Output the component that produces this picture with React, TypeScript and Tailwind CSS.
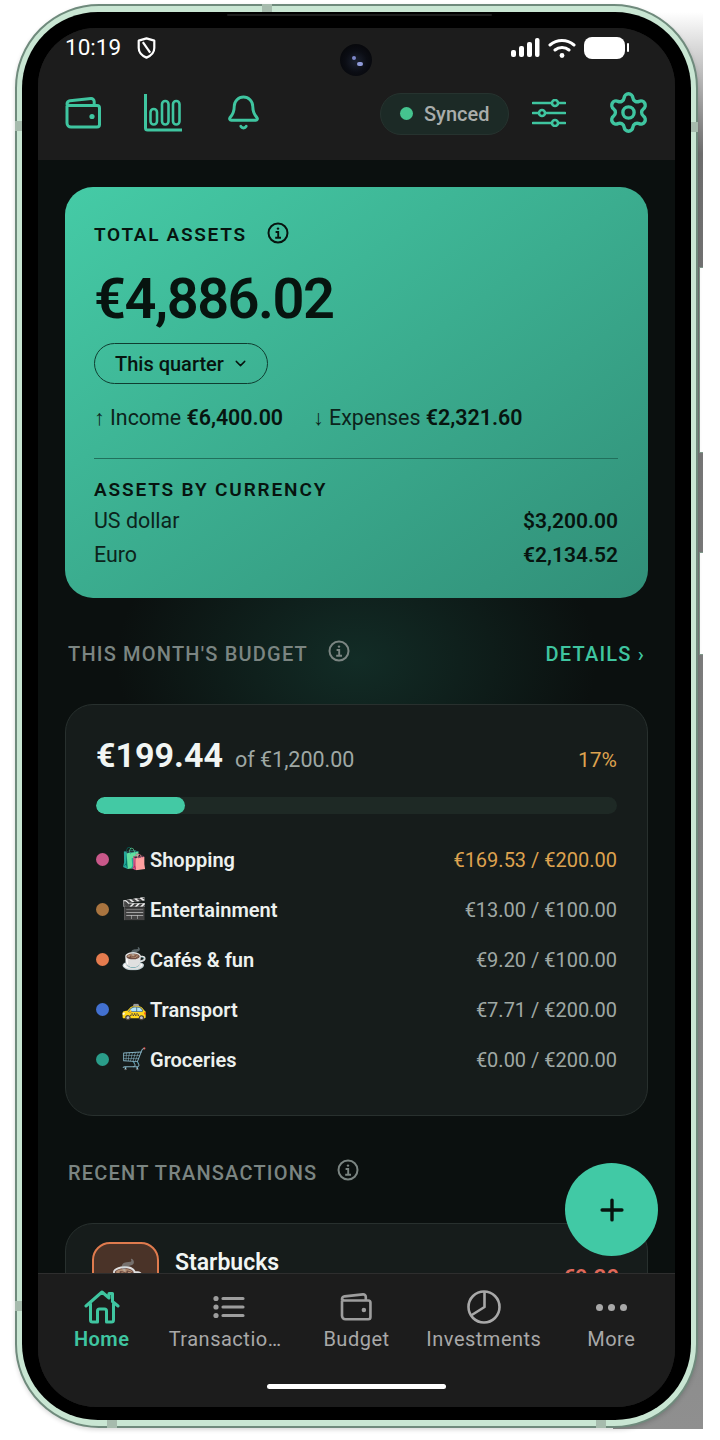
import React from 'react';
import { Bell, ChevronDown, Plus, Settings } from 'lucide-react';

const categories = [
    { dot: 'bg-[#c9588a]', emoji: '🛍️', name: 'Shopping', value: '€169.53 / €200.00', warn: true },
    { dot: 'bg-[#a9743f]', emoji: '🎬', name: 'Entertainment', value: '€13.00 / €100.00', warn: false },
    { dot: 'bg-[#e57b4e]', emoji: '☕', name: 'Cafés & fun', value: '€9.20 / €100.00', warn: false },
    { dot: 'bg-[#4270d0]', emoji: '🚕', name: 'Transport', value: '€7.71 / €200.00', warn: false },
    { dot: 'bg-[#2a9d8a]', emoji: '🛒', name: 'Groceries', value: '€0.00 / €200.00', warn: false },
];

// lighter antenna bands cut into the metal frame
const bands = [
    'left-[245px] -top-[2px] w-[10px] h-[9px]',
    '-left-[2px] top-[115px] w-[8px] h-[10px]',
    '-right-[2px] top-[116px] w-[8px] h-[10px]',
    '-left-[2px] top-[1295px] w-[8px] h-[10px]',
    'left-[90px] -bottom-[2px] w-[10px] h-[9px]',
    'right-[90px] -bottom-[2px] w-[10px] h-[9px]',
];

const InfoIcon = ({ className }: { className: string }) => (
    <svg viewBox="0 0 22 22" fill="none" stroke="currentColor" strokeWidth="2" className={className}>
        <circle cx="11" cy="11" r="9.5" />
        <circle cx="11" cy="6.6" r="1.2" fill="currentColor" stroke="none" />
        <path d="M8.6 10h2.6v5.6M8.2 15.8h5.8" strokeWidth="1.9" />
    </svg>
);

const WalletIcon = ({ className }: { className: string }) => (
    <svg viewBox="0 0 36 32" fill="none" stroke="currentColor" strokeWidth="3" strokeLinejoin="round" className={className}>
        <path d="M2 8.5V26a4 4 0 0 0 4 4h26a2.5 2.5 0 0 0 2.5-2.5V11a2.5 2.5 0 0 0-2.5-2.5H6A4 4 0 0 1 2 7a3.5 3.5 0 0 1 3-3.2L26 1.6a3 3 0 0 1 3.2 2.9v3.5" />
        <circle cx="27" cy="19.5" r="2.6" fill="currentColor" stroke="none" />
    </svg>
);

const ChartIcon = () => (
    <svg viewBox="0 0 38 38" fill="none" stroke="currentColor" strokeWidth="3" className="w-[38px] h-[38px] text-[#3fc5a0]">
        <path d="M1.5 0v34a2 2 0 0 0 2 2H38" strokeLinecap="round" />
        <rect x="6.5" y="15" width="6.5" height="15.5" rx="3.2" strokeWidth="2.6" />
        <rect x="18" y="7" width="6.5" height="23.5" rx="3.2" strokeWidth="2.6" />
        <rect x="29" y="7" width="6.5" height="23.5" rx="3.2" strokeWidth="2.6" />
    </svg>
);

const SlidersIcon = () => (
    <svg viewBox="0 0 34 28" fill="none" stroke="currentColor" strokeWidth="2.6" strokeLinecap="round" className="w-[34px] h-[28px] text-[#3fc5a0]">
        <path d="M1 4h32M1 14h32M1 24h32" />
        <circle cx="23" cy="4" r="3" fill="#1c1c1c" />
        <circle cx="10" cy="14" r="3" fill="#1c1c1c" />
        <circle cx="23" cy="24" r="3" fill="#1c1c1c" />
    </svg>
);

const HomeIcon = () => (
    <svg viewBox="0 0 36 34" fill="none" stroke="currentColor" strokeWidth="3" strokeLinejoin="round" strokeLinecap="round" className="w-[36px] h-[34px] text-[#3fc5a0]">
        <path d="M2 16 18 2l7 6V3.5h3.5v8L34 16" />
        <path d="M6.5 14v16a2 2 0 0 0 2 2h5V21a2 2 0 0 1 2-2h5a2 2 0 0 1 2 2v11h5a2 2 0 0 0 2-2V14" />
    </svg>
);

const ListIcon = () => (
    <svg viewBox="0 0 32 24" fill="none" stroke="currentColor" strokeWidth="3.2" strokeLinecap="round" className="w-[32px] h-[24px] text-[#9d9d9d]">
        <path d="M10 3.5h20M10 12h20M10 20.5h20" />
        <circle cx="3" cy="3.5" r="2.6" fill="currentColor" stroke="none" />
        <circle cx="3" cy="12" r="2.6" fill="currentColor" stroke="none" />
        <circle cx="3" cy="20.5" r="2.6" fill="currentColor" stroke="none" />
    </svg>
);

const PieIcon = () => (
    <svg viewBox="0 0 34 34" fill="none" stroke="currentColor" strokeWidth="2.6" strokeLinejoin="round" className="w-[34px] h-[34px] text-[#a8a8a8]">
        <circle cx="17" cy="17" r="15.5" />
        <path d="M17.5 1.5V17L4 25.5" />
    </svg>
);

const NavItem = ({ icon, label, active, labelClass }: { icon: React.ReactNode; label: string; active?: boolean; labelClass?: string }) => (
    <div className="flex flex-col items-center">
        <div className="h-[36px] flex items-center justify-center">{icon}</div>
        <span
            className={
                active
                    ? 'text-[20px] leading-[28px] font-semibold tracking-[0.5px] text-[#3fc5a0]'
                    : `text-[20px] leading-[28px] tracking-[0.5px] text-[#a8a8a8] whitespace-nowrap ${labelClass ?? ''}`
            }
        >
            {label}
        </span>
    </div>
);

const SectionHeading = ({ title }: { title: string }) => (
    <div className="flex items-center">
        <span className="text-[20px] leading-[28px] font-medium tracking-[1.2px] text-[#7b8582]">{title}</span>
        <InfoIcon className="ml-[20px] w-[22px] h-[22px] text-[#7b8582] -mt-[7px]" />
    </div>
);

export default function App() {
    return (
        <div className="w-[720px] h-[1440px] bg-white overflow-hidden font-['Roboto',sans-serif]">
            <div className="relative isolate ml-[15px] mt-[4px] w-[683px] h-[1424px]">
                {/* cast shadow behind the right edge, cut off by the picture */}
                <div className="absolute -z-10 -right-[5px] top-[8px] -bottom-[1px] w-[90px] bg-gradient-to-b from-white via-[#6e6e6e] via-[10%] to-[#8f8f8f]" />
                {/* side keys */}
                <div className="absolute -z-10 -right-[5px] top-[263px] w-[4px] h-[186px] bg-white border-l border-y border-[#7f9a8b]" />
                <div className="absolute -z-10 -right-[5px] top-[548px] w-[4px] h-[103px] bg-white border-l border-y border-[#7f9a8b]" />
                <div className="relative w-full h-full rounded-[84px] bg-[#c9e6d3] border-[2px] border-[#6f8a7c] pt-[6px] pb-[6px] px-[5px] shadow-[0_2px_4px_rgba(0,0,0,0.15)]">
                    {bands.map((b) => (
                        <div key={b} className={`absolute bg-[#a6bbad] ${b}`} />
                    ))}
                    <div className="relative w-full h-full rounded-[76px] bg-black pt-[16px] pb-[13px] px-[16px]">
                        <div className="absolute left-[205px] top-[2px] w-[265px] h-[2px] rounded-full bg-[#1c1c1c]" />
                        <div className="relative w-full h-full rounded-[58px] overflow-hidden bg-[#1c1c1c] flex flex-col">
                            {/* status bar + toolbar */}
                            <div className="bg-[#1c1c1c] h-[132px] shrink-0 px-[27px]">
                                <div className="h-[39px] flex items-center justify-between text-white">
                                    <div className="flex items-center gap-[16px]">
                                        <span className="text-[22.5px] leading-none">10:19</span>
                                        <svg viewBox="0 0 20 24" fill="none" stroke="currentColor" strokeWidth="2.4" className="w-[19px] h-[22px]">
                                            <path d="M10 1.5 18.5 4v8c0 5-3.6 8.4-8.5 10.5C5.1 20.4 1.5 17 1.5 12V4z" strokeLinejoin="round" />
                                            <path d="M6 5.5 14 17" />
                                        </svg>
                                    </div>
                                    <div className="flex items-center gap-[8px] pr-[19px]">
                                        <svg viewBox="0 0 30 22" fill="currentColor" className="w-[30px] h-[22px]">
                                            <rect x="1" y="13" width="5" height="7" rx="2" />
                                            <rect x="9" y="9" width="5" height="11" rx="2" />
                                            <rect x="17" y="5" width="5" height="15" rx="2" />
                                            <rect x="25" y="1" width="4.5" height="19" rx="2" />
                                        </svg>
                                        <svg viewBox="0 0 28 22" fill="none" stroke="currentColor" strokeWidth="3" strokeLinecap="round" className="w-[28px] h-[22px]">
                                            <path d="M2 8c7-6 17-6 24 0M7 13c4-3.5 10-3.5 14 0" />
                                            <circle cx="14" cy="18.5" r="2.4" fill="currentColor" stroke="none" />
                                        </svg>
                                        <div className="flex items-center">
                                            <div className="w-[41px] h-[22px] rounded-[8px] bg-white" />
                                            <div className="ml-[2px] w-[2px] h-[9px] rounded-full bg-white" />
                                        </div>
                                    </div>
                                </div>
                                <div className="mt-[23px] flex items-center justify-between">
                                    <div className="flex items-center">
                                        <WalletIcon className="w-[36px] h-[32px] text-[#3fc5a0]" />
                                        <div className="ml-[43px]">
                                            <ChartIcon />
                                        </div>
                                        <Bell className="ml-[43px] w-[37px] h-[37px] text-[#3fc5a0]" strokeWidth={1.9} />
                                    </div>
                                    <div className="flex items-center -mr-[3px]">
                                        <div className="flex items-center w-[129px] h-[42px] rounded-full bg-[#1c2a26] border border-[#26332f] pl-[19px] mt-[2px]">
                                            <span className="w-[13px] h-[13px] rounded-full bg-[#45c48f]" />
                                            <span className="ml-[11px] text-[20px] font-medium text-[#a9adab]">Synced</span>
                                        </div>
                                        <div className="ml-[23px]">
                                            <SlidersIcon />
                                        </div>
                                        <Settings className="ml-[40px] w-[45px] h-[45px] text-[#3fc5a0]" strokeWidth={1.8} />
                                    </div>
                                </div>
                            </div>

                            {/* scrolling content */}
                            <div className="relative flex-1 overflow-hidden bg-[#0b100f] bg-[radial-gradient(ellipse_240px_170px_at_50%_500px,#122c26_0%,transparent_100%)] px-[27px] pt-[27px]">
                                <div className="h-[411px] rounded-[28px] bg-gradient-to-br from-[#45cba6] to-[#318f78] pl-[29px] pr-[30px] pt-[33px] text-[#07140f]">
                                    <div className="flex items-center">
                                        <span className="text-[19px] leading-[30px] font-semibold tracking-[1.7px]">TOTAL ASSETS</span>
                                        <InfoIcon className="ml-[20px] w-[22px] h-[22px] -mt-[4px]" />
                                    </div>
                                    <div className="mt-[14px] text-[56px] leading-[70px] font-semibold tracking-[-1.5px]">€4,886.02</div>
                                    <div className="mt-[9px] w-[174px] h-[41px] rounded-full border border-[#0f3d30] flex items-center pl-[20px]">
                                        <span className="text-[20px] font-medium">This quarter</span>
                                        <ChevronDown className="ml-[8px] w-[17px] h-[17px]" />
                                    </div>
                                    <div className="mt-[20px] flex text-[21.4px] leading-[28px] text-[#0c241c]">
                                        <span>↑ Income <span className="font-semibold text-[#07140f]">€6,400.00</span></span>
                                        <span className="ml-[30px]">↓ Expenses <span className="font-semibold text-[#07140f]">€2,321.60</span></span>
                                    </div>
                                    <div className="mt-[26px] border-t border-[#21705c]" />
                                    <div className="mt-[17px] text-[19px] leading-[28px] font-semibold tracking-[1.85px]">ASSETS BY CURRENCY</div>
                                    <div className="flex justify-between text-[21px] leading-[34px]">
                                        <span className="text-[21.4px] text-[#0c241c]">US dollar</span>
                                        <span className="font-semibold">$3,200.00</span>
                                    </div>
                                    <div className="flex justify-between text-[21px] leading-[34px]">
                                        <span className="text-[21.4px] text-[#0c241c]">Euro</span>
                                        <span className="font-semibold">€2,134.52</span>
                                    </div>
                                </div>

                                <div className="mt-[42px] ml-[3px] mr-[3px] flex items-center justify-between">
                                    <SectionHeading title="THIS MONTH'S BUDGET" />
                                    <span className="text-[20px] leading-[28px] font-medium tracking-[1.2px] text-[#3fc5a0]">DETAILS ›</span>
                                </div>

                                <div className="mt-[36px] h-[412px] rounded-[28px] bg-[#161c1b] border border-[#28302e] px-[30px] pt-[29px]">
                                    <div className="flex items-baseline">
                                        <span className="text-[34px] leading-[42px] font-bold text-[#f1f5f3]">€199.44</span>
                                        <span className="ml-[12px] text-[21.5px] text-[#9fa8a4]">of €1,200.00</span>
                                        <span className="ml-auto text-[21px] text-[#dda24f]">17%</span>
                                    </div>
                                    <div className="mt-[20px] h-[17px] rounded-full bg-[#1e2925] overflow-hidden">
                                        <div className="h-full w-[17%] rounded-full bg-[#43c9a4]" />
                                    </div>
                                    <div className="mt-[21px]">
                                        {categories.map((c) => (
                                            <div key={c.name} className="h-[50px] flex items-center">
                                                <span className={`w-[13px] h-[13px] rounded-full ${c.dot}`} />
                                                <span className="ml-[12px] w-[29px] text-[21px] leading-none font-['Noto_Color_Emoji',sans-serif]">{c.emoji}</span>
                                                <span className="text-[20px] font-semibold text-[#edf1ef]">{c.name}</span>
                                                <span className={c.warn ? 'ml-auto text-[20px] text-[#dda24f]' : 'ml-auto text-[20px] text-[#9fa8a4]'}>{c.value}</span>
                                            </div>
                                        ))}
                                    </div>
                                </div>

                                <div className="mt-[43px] ml-[3px]">
                                    <SectionHeading title="RECENT TRANSACTIONS" />
                                </div>

                                <div className="mt-[36px] h-[200px] rounded-[28px] bg-[#161c1b] border border-[#28302e] pl-[26px] pt-[18px] pr-[28px] flex">
                                    <div className="w-[67px] h-[67px] rounded-[18px] bg-[#4a3328] border-[2px] border-[#e07b4e] flex items-center justify-center text-[30px]">☕</div>
                                    <span className="ml-[16px] text-[23px] leading-[42px] font-semibold text-[#f1f5f3]">Starbucks</span>
                                    <span className="ml-auto mt-[19px] text-[22px] font-semibold text-[#e0695a]">-€9.20</span>
                                </div>

                                <div className="absolute right-[17px] top-[1003px] w-[93px] h-[93px] rounded-full bg-[#41c9a5] flex items-center justify-center text-[#07140f]">
                                    <Plus className="w-[34px] h-[34px]" strokeWidth={2.4} />
                                </div>
                            </div>

                            {/* bottom nav */}
                            <div className="shrink-0 h-[134px] bg-[#1c1c1c] border-t border-[#2e2e2e] relative z-10 pt-[15px]">
                                <div className="grid grid-cols-5">
                                    <NavItem icon={<HomeIcon />} label="Home" active />
                                    <NavItem icon={<ListIcon />} label="Transactio…" labelClass="-ml-[8px]" />
                                    <NavItem icon={<WalletIcon className="w-[32px] h-[28px] text-[#9d9d9d]" />} label="Budget" />
                                    <NavItem icon={<PieIcon />} label="Investments" />
                                    <NavItem
                                        icon={
                                            <div className="flex gap-[5px]">
                                                <span className="w-[7px] h-[7px] rounded-full bg-[#a8a8a8]" />
                                                <span className="w-[7px] h-[7px] rounded-full bg-[#a8a8a8]" />
                                                <span className="w-[7px] h-[7px] rounded-full bg-[#a8a8a8]" />
                                            </div>
                                        }
                                        label="More"
                                    />
                                </div>
                                <div className="mx-auto mt-[31px] w-[179px] h-[5px] rounded-full bg-white" />
                            </div>

                            {/* punch-hole camera */}
                            <div className="absolute left-[302px] top-[16px] w-[32px] h-[32px] rounded-full bg-[radial-gradient(circle_at_50%_55%,#1b2130_0%,#0b0d14_45%,#030304_100%)]">
                                <span className="absolute left-[12px] top-[12px] w-[4px] h-[4px] rounded-full bg-[#7c86c8]" />
                                <span className="absolute left-[17px] top-[18px] w-[6px] h-[4px] rounded-full bg-[#8f9ad8]" />
                            </div>
                        </div>
                    </div>
                </div>
            </div>
        </div>
    );
}
